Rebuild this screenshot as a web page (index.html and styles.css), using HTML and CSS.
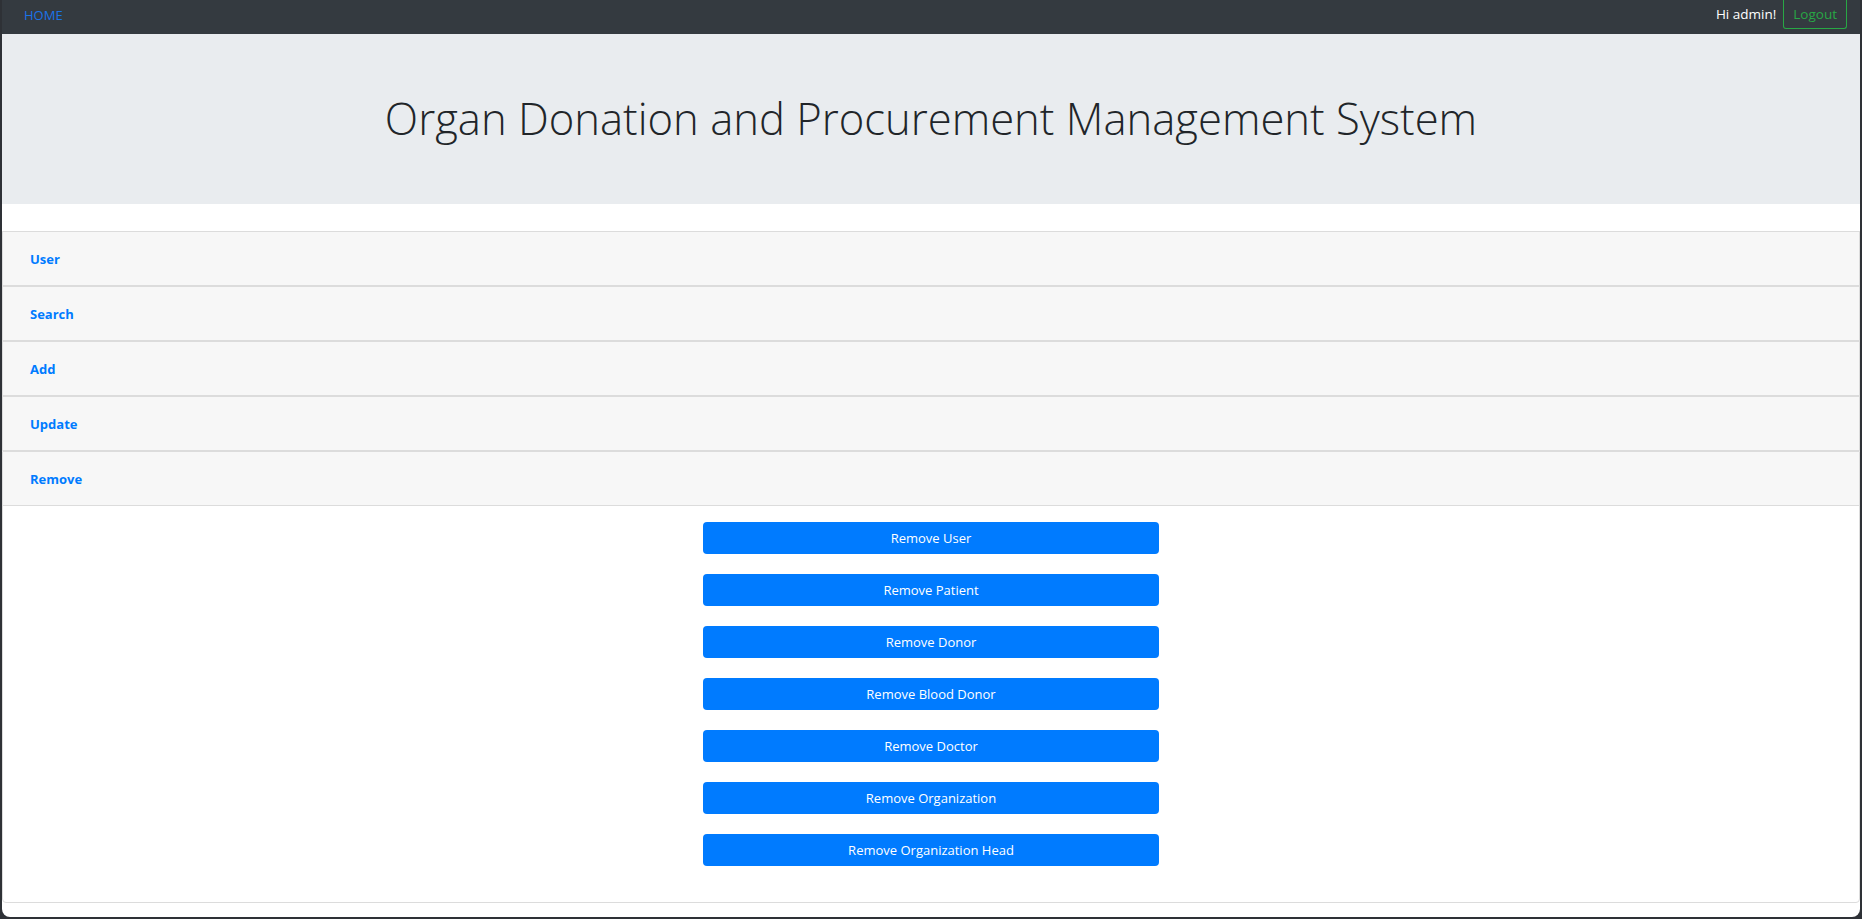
FILE: index.html
```html
<!DOCTYPE html>
<html lang="en">
<head>
<meta charset="utf-8">
<title>Organ Donation and Procurement Management System</title>
<link rel="stylesheet" href="styles.css">
</head>
<body>
<div class="window">
  <nav class="navbar">
    <a class="nav-home" href="#">HOME</a>
    <div class="nav-right">
      <span class="greeting">Hi admin!</span>
      <button class="btn-logout" type="button">Logout</button>
    </div>
  </nav>
  <header class="jumbotron">
    <h1 class="title">Organ Donation and Procurement Management System</h1>
  </header>
  <div class="accordion">
    <div class="card"><div class="card-header"><span class="card-link">User</span></div></div>
    <div class="card"><div class="card-header"><span class="card-link">Search</span></div></div>
    <div class="card"><div class="card-header"><span class="card-link">Add</span></div></div>
    <div class="card"><div class="card-header"><span class="card-link">Update</span></div></div>
    <div class="card last">
      <div class="card-header"><span class="card-link">Remove</span></div>
      <div class="card-body">
        <button class="btn-primary" type="button">Remove User</button>
        <button class="btn-primary" type="button">Remove Patient</button>
        <button class="btn-primary" type="button">Remove Donor</button>
        <button class="btn-primary" type="button">Remove Blood Donor</button>
        <button class="btn-primary" type="button">Remove Doctor</button>
        <button class="btn-primary" type="button">Remove Organization</button>
        <button class="btn-primary" type="button">Remove Organization Head</button>
      </div>
    </div>
  </div>
</div>
</body>
</html>
```
FILE: styles.css
```css
* { box-sizing: border-box; }
html, body { margin: 0; padding: 0; }
body {
  background: #2e3136;
  height: 919px;
  overflow: hidden;
  font-family: "Open Sans", "Noto Sans", Arial, sans-serif;
  color: #212529;
}
.window {
  margin: 0 2px 0 2px;
  height: 917px;
  background: #fff;
  border-radius: 0 0 8px 8px;
  overflow: hidden;
  display: flex;
  flex-direction: column;
}
.navbar {
  height: 34px;
  flex: none;
  background: #343a40;
  display: flex;
  align-items: center;
  justify-content: space-between;
  padding: 0 13px 0 22px;
}
.nav-home {
  font-family: "Open Sans", "Noto Sans", Arial, sans-serif;
  color: #1a73e8;
  text-decoration: none;
  font-size: 13px;
  margin-top: -4px;
}
.nav-right {
  display: flex;
  align-items: flex-start;
  height: 34px;
}
.greeting {
  color: #fff;
  font-size: 13.5px;
  margin-top: 5px;
  margin-right: 7px;
}
.btn-logout {
  font-family: "Open Sans", "Noto Sans", Arial, sans-serif;
  font-weight: 400;
  background: transparent;
  color: #28a745;
  border: 1px solid #28a745;
  border-top: none;
  border-radius: 0 0 3px 3px;
  font-size: 13.5px;
  height: 29px;
  padding: 0 9px;
  margin: 0;
}
.jumbotron {
  flex: none;
  height: 170px;
  background: #e9ecef;
  display: flex;
  align-items: center;
  justify-content: center;
}
.title {
  margin: 0;
  font-weight: 300;
  font-size: 43.6px;
  color: #212529;
  padding-bottom: 3px;
}
.accordion {
  margin-top: 27px;
}
.card {
  border: 1px solid #dcdcdc;
  border-bottom: none;
  background: #fff;
}
.card.last {
  border-bottom: 1px solid #dcdcdc;
  border-radius: 0 0 4px 4px;
}
.card-header {
  height: 54px;
  background: #f7f7f7;
  border-bottom: 1px solid #dcdcdc;
  display: flex;
  align-items: center;
  padding-left: 27px;
}
.card-link {
  color: #007bff;
  font-weight: 700;
  font-size: 13px;
}
.card-body {
  display: flex;
  flex-direction: column;
  align-items: center;
  gap: 20px;
  padding: 16px 0 36px;
}
.btn-primary {
  font-family: "Open Sans", "Noto Sans", Arial, sans-serif;
  width: 456px;
  height: 32px;
  background: #007bff;
  color: #fff;
  border: none;
  border-radius: 4px;
  font-size: 13px;
  margin: 0;
  padding: 0;
}
```
